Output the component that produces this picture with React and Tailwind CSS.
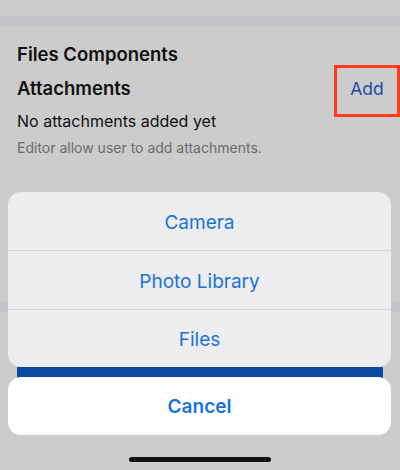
import React from "react";

const font = { fontFamily: "Inter, 'Noto Sans', sans-serif" };

const actions = ["Camera", "Photo Library", "Files"];

export default function App() {
  return (
    <div className="relative h-[470px] w-[400px] overflow-hidden bg-[#cccccc]" style={font}>
      {/* page behind the sheet */}
      <div className="h-[16px] bg-[#cccccc]" />
      <div className="h-[10px] bg-[#c4c5c9]" />
      <div className="px-[17px] pt-[17px]">
        <h2 className="text-[18.5px] leading-[22px] font-semibold text-[#111111]">Files Components</h2>
        <div className="flex items-center justify-between">
          <h3 className="mb-[6px] text-[18.5px] leading-[22px] font-semibold text-[#111111]">Attachments</h3>
          <div className="-mr-[17px] flex h-[52px] w-[66px] items-center justify-center border-[3px] border-[#ff3a1d]">
            <span className="mb-[4px] text-[17.5px] text-[#1c4ea3]">Add</span>
          </div>
        </div>
        <p className="mt-[-7px] text-[16px] leading-[22px] text-[#111111]">No attachments added yet</p>
        <p className="mt-[7px] text-[14px] leading-[18px] text-[#6b6b6e]">Editor allow user to add attachments.</p>
      </div>
      <div className="mt-[145px] h-[10px] bg-[#c2c4c8]" />
      <div className="mx-[17px] mt-[55px] h-[40px] bg-[#0c4aa6]" />

      {/* action sheet */}
      <div className="absolute inset-x-0 top-[192px] px-[8px] pr-[9px]">
        <div className="overflow-hidden rounded-[13px] bg-[#ededef]">
          {actions.map((a, i) => (
            <div
              key={a}
              className={
                i < actions.length - 1
                  ? "flex h-[59px] items-center justify-center border-b border-[#d6d6d9] pt-[4px] text-[19px] text-[#1a72dc]"
                  : "flex h-[57px] items-center justify-center pt-[4px] text-[19px] text-[#1a72dc]"
              }
            >
              {a}
            </div>
          ))}
        </div>
        <div className="mt-[10px] flex h-[58px] items-center justify-center rounded-[13px] bg-white pt-[3px] text-[19px] font-semibold text-[#1a72dc]">
          Cancel
        </div>
        <div className="mt-[22px] flex justify-center">
          <div className="h-[5px] w-[142px] rounded-full bg-[#111111]" />
        </div>
      </div>
    </div>
  );
}
